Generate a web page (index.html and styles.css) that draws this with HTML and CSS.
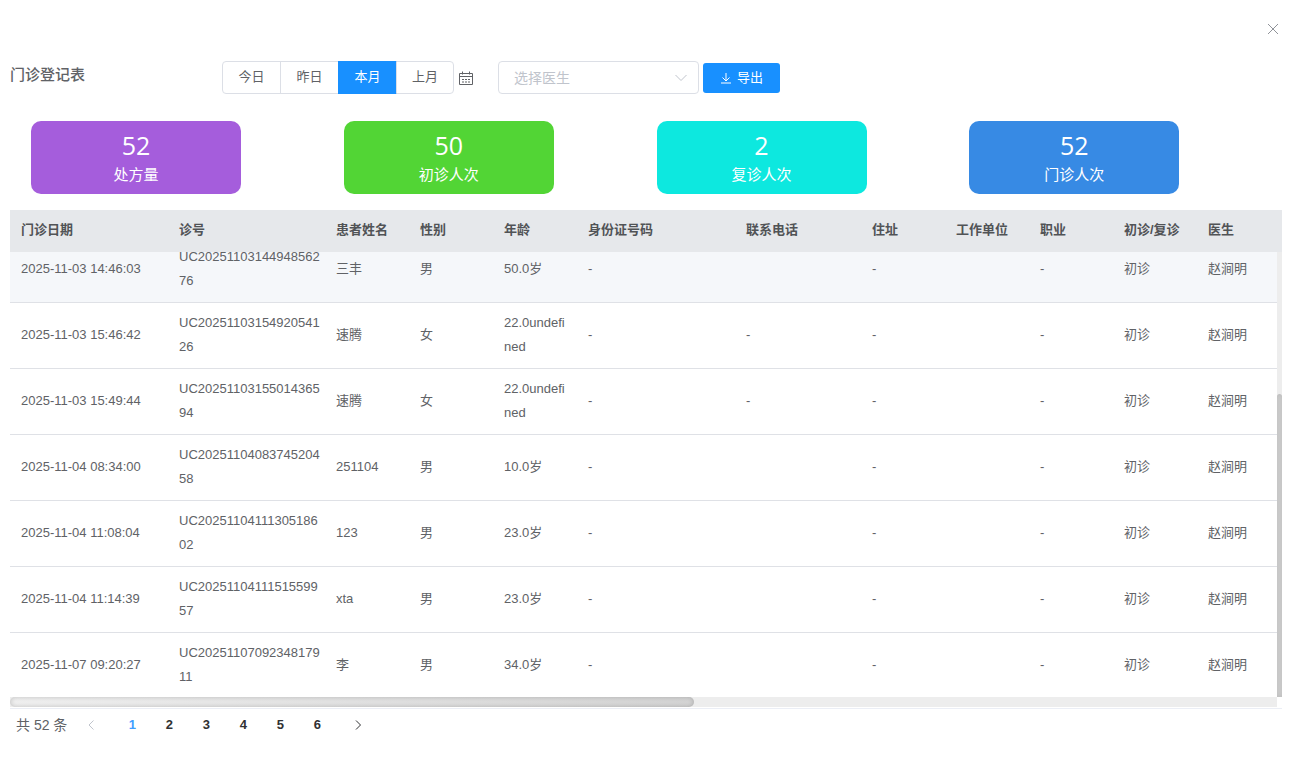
FILE: index.html
```html
<!DOCTYPE html>
<html lang="zh-CN">
<head>
    <meta charset="UTF-8">
    <meta name="viewport" content="width=device-width, initial-scale=1.0">
    <title>门诊登记表</title>
    <link rel="stylesheet" href="styles.css">
</head>
<body>
    <header class="dialog-header">
        <button type="button" class="close" aria-label="关闭">
            <svg width="14" height="14" viewBox="0 0 14 14"><path d="M2 2l10 10M12 2L2 12"/></svg>
        </button>
    </header>

    <form class="toolbar">
        <h1 class="title">门诊登记表</h1>
        <div class="range">
            <label><input type="radio" name="range" value="today"><span>今日</span></label>
            <label><input type="radio" name="range" value="yesterday"><span>昨日</span></label>
            <label><input type="radio" name="range" value="month" checked><span>本月</span></label>
            <label><input type="radio" name="range" value="last"><span>上月</span></label>
        </div>
        <button type="button" class="calendar" aria-label="选择日期">
            <svg width="14" height="14" viewBox="0 0 14 14">
                <path d="M.5 2.5h13v11H.5zM.5 5.5h13M3.5 .5v3M10.500 .5v3"/>
                <path d="M3 8.500h2M6 8.500h2M9 8.500h2M3 11h2M6 11h2M9 11h2"/>
            </svg>
        </button>
        <div class="doctor">
            <select name="doctor" aria-label="选择医生">
                <option value="">选择医生</option>
                <option>赵涧明</option>
            </select>
            <svg width="12" height="8" viewBox="0 0 12 8"><path d="M.5 1L6 6.500 11.500 1"/></svg>
        </div>
        <button type="button" class="export">
            <svg width="12" height="12" viewBox="0 0 12 12"><path d="M6 1v8M2.500 5.500L6 9l3.500-3.500M1 11h10"/></svg>
            <span>导出</span>
        </button>
    </form>

    <section class="cards">
        <div class="card purple"><strong>52</strong><span>处方量</span></div>
        <div class="card green"><strong>50</strong><span>初诊人次</span></div>
        <div class="card cyan"><strong>2</strong><span>复诊人次</span></div>
        <div class="card blue"><strong>52</strong><span>门诊人次</span></div>
    </section>

    <div class="table-box">
        <div class="scroller" id="scroller">
            <table>
                <colgroup>
                    <col class="w-date"><col class="w-no"><col class="w-s"><col class="w-s"><col class="w-s"><col class="w-date">
                    <col class="w-phone"><col class="w-s"><col class="w-s"><col class="w-s"><col class="w-s"><col class="w-last">
                </colgroup>
                <thead>
                    <tr>
                        <th>门诊日期</th><th>诊号</th><th>患者姓名</th><th>性别</th><th>年龄</th><th>身份证号码</th>
                        <th>联系电话</th><th>住址</th><th>工作单位</th><th>职业</th><th>初诊/复诊</th><th>医生</th>
                    </tr>
                </thead>
                <tbody>
                    <tr class="active">
                        <td>2025-11-03 14:46:03</td><td>UC20251103144948562<wbr>76</td><td>三丰</td><td>男</td><td>50.0岁</td><td>-</td>
                        <td></td><td>-</td><td></td><td>-</td><td>初诊</td><td>赵涧明</td>
                    </tr>
                    <tr>
                        <td>2025-11-03 15:46:42</td><td>UC20251103154920541<wbr>26</td><td>速腾</td><td>女</td><td>22.0undefi<wbr>ned</td><td>-</td>
                        <td>-</td><td>-</td><td></td><td>-</td><td>初诊</td><td>赵涧明</td>
                    </tr>
                    <tr>
                        <td>2025-11-03 15:49:44</td><td>UC20251103155014365<wbr>94</td><td>速腾</td><td>女</td><td>22.0undefi<wbr>ned</td><td>-</td>
                        <td>-</td><td>-</td><td></td><td>-</td><td>初诊</td><td>赵涧明</td>
                    </tr>
                    <tr>
                        <td>2025-11-04 08:34:00</td><td>UC20251104083745204<wbr>58</td><td>251104</td><td>男</td><td>10.0岁</td><td>-</td>
                        <td></td><td>-</td><td></td><td>-</td><td>初诊</td><td>赵涧明</td>
                    </tr>
                    <tr>
                        <td>2025-11-04 11:08:04</td><td>UC20251104111305186<wbr>02</td><td>123</td><td>男</td><td>23.0岁</td><td>-</td>
                        <td></td><td>-</td><td></td><td>-</td><td>初诊</td><td>赵涧明</td>
                    </tr>
                    <tr>
                        <td>2025-11-04 11:14:39</td><td>UC20251104111515599<wbr>57</td><td>xta</td><td>男</td><td>23.0岁</td><td>-</td>
                        <td></td><td>-</td><td></td><td>-</td><td>初诊</td><td>赵涧明</td>
                    </tr>
                    <tr>
                        <td>2025-11-07 09:20:27</td><td>UC20251107092348179<wbr>11</td><td>李</td><td>男</td><td>34.0岁</td><td>-</td>
                        <td></td><td>-</td><td></td><td>-</td><td>初诊</td><td>赵涧明</td>
                    </tr>
                </tbody>
            </table>
        </div>
        <div class="bar-y"><div class="thumb-y"></div></div>
        <div class="bar-x"><div class="thumb-x"></div></div>
    </div>

    <nav class="pagination">
        <span class="total">共 52 条</span>
        <button type="button" disabled aria-label="上一页"><svg width="8" height="12" viewBox="0 0 8 12"><path d="M6.500 1.500L2 6l4.500 4.500"/></svg></button>
        <div class="pages">
            <button type="button" class="current">1</button>
            <button type="button">2</button>
            <button type="button">3</button>
            <button type="button">4</button>
            <button type="button">5</button>
            <button type="button">6</button>
        </div>
        <button type="button" aria-label="下一页"><svg width="8" height="12" viewBox="0 0 8 12"><path d="M2 1.500L6.500 6 2 10.500"/></svg></button>
    </nav>

<script src="script.js"></script>
</body>
</html>
```

FILE: styles.css
```css
* {
    box-sizing: border-box;
}

body {
    display: flex;
    flex-direction: column;
    height: 100vh;
    margin: 0;
    padding: 0 19px 0 10px;
    overflow: hidden;
    background: #fff;
    color: #606266;
    font: 13px/24px "Liberation Sans", "Noto Sans CJK SC", sans-serif;
}

button, select {
    font: inherit;
    color: inherit;
    border: none;
    background: none;
    padding: 0;
    cursor: pointer;
}

svg {
    display: block;
    fill: none;
    stroke: currentColor;
}

.dialog-header {
    display: flex;
    justify-content: flex-end;
    padding: 22px 2px 25px;
}

.close {
    color: #909399;
}

/* toolbar */
.toolbar {
    display: flex;
    align-items: center;
    height: 33px;
}

.title {
    width: 212px;
    margin: 0;
    padding-bottom: 6px;
    font-size: 15px;
    font-weight: 500;
}

.range {
    display: flex;
    padding-right: 1px;
}

.range label {
    position: relative;
    width: 58px;
}

.range input {
    position: absolute;
    inset: 0;
    margin: 0;
    opacity: 0;
}

.range span {
    display: block;
    height: 33px;
    margin-right: -1px;
    border: 1px solid #dcdfe6;
    line-height: 30px;
    text-align: center;
}

.range label:first-child span {
    border-radius: 4px 0 0 4px;
}

.range label:last-child span {
    margin-right: 0;
    border-radius: 0 4px 4px 0;
}

.range input:checked + span {
    position: relative;
    border-color: #1890ff;
    background: #1890ff;
    color: #fff;
}

.calendar {
    margin: 0 25px 0 4px;
}

.doctor {
    position: relative;
    width: 201px;
    margin-right: 4px;
}

.doctor select {
    width: 100%;
    height: 33px;
    padding: 0 15px;
    border: 1px solid #dcdfe6;
    border-radius: 4px;
    appearance: none;
    color: #c0c4cc;
    font-size: 14px;
}

.doctor svg {
    position: absolute;
    top: 13px;
    right: 12px;
    color: #c0c4cc;
    pointer-events: none;
}

.export {
    display: flex;
    align-items: center;
    justify-content: center;
    gap: 5px;
    width: 77px;
    height: 30px;
    border-radius: 3px;
    background: #1890ff;
    color: #fff;
}

/* statistics */
.cards {
    display: grid;
    grid-template-columns: repeat(4, 1fr);
    padding: 27px 0 16px 21px;
}

.card {
    display: flex;
    flex-direction: column;
    align-items: center;
    gap: 2px;
    width: 210px;
    height: 73px;
    padding-top: 8px;
    border-radius: 10px;
    color: #fff;
    font-size: 15px;
}

.card strong {
    font: 25px/32px "Open Sans", sans-serif;
}

.purple { background: #a55ddc; }
.green { background: #52d535; }
.cyan { background: #0de8df; }
.blue { background: #378ae4; }

/* table */
.table-box {
    display: grid;
    grid-template-columns: 1fr 5px;
    grid-template-rows: 42px 1fr 10px;
    flex: 1;
    min-height: 0;
    padding-bottom: 1px;
    border-bottom: 1px solid #ebeef5;
}

.scroller {
    grid-area: 1 / 1 / 3 / 3;
    min-height: 0;
    overflow-y: auto;
    scrollbar-width: none;
}

table {
    width: 100%;
    table-layout: fixed;
    border-collapse: separate;
    border-spacing: 0;
}

.w-date { width: 158px; }
.w-no { width: 157px; }
.w-s { width: 84px; }
.w-phone { width: 126px; }
.w-last { width: 85px; }

th {
    position: sticky;
    top: 0;
    padding: 8px 0 10px 11px;
    background: #e6e8eb;
    color: #515356;
    text-align: left;
}

td {
    height: 66px;
    padding: 8px 4px 9px 11px;
    border-bottom: 1px solid #dfe1e6;
}

.active td {
    background: #f5f7fa;
}

.bar-y {
    z-index: 1;
    grid-area: 2 / 2;
    display: flex;
    flex-direction: column;
    justify-content: flex-end;
    background: #ededed;
}

.thumb-y {
    height: 68%;
    border-radius: 5px 5px 0 0;
    background: #d0d0d0;
    box-shadow: inset 0 0 5px rgba(0, 0, 0, .1);
}

.bar-x {
    grid-area: 3 / 1;
    background: #ededed;
}

.thumb-x {
    width: 54%;
    height: 10px;
    border-radius: 5px;
    background: linear-gradient(to right, #f0f0f0, #d4d4d4);
    box-shadow: inset 0 0 5px rgba(0, 0, 0, .2);
}

/* pagination */
.pagination {
    display: flex;
    align-items: center;
    height: 52px;
    padding: 0 6px 20px;
}

.total {
    margin-right: 8px;
    font-size: 14px;
}

.pagination button {
    display: flex;
    align-items: center;
    justify-content: center;
    width: 32px;
    height: 28px;
    color: #303133;
    font-weight: bold;
}

.pagination button:disabled {
    color: #c0c4cc;
}

.pagination .current {
    color: #409eff;
}

.pages {
    display: flex;
    gap: 5px;
    margin: 0 9px;
}
```

FILE: script.js
```js
const scroller = document.getElementById('scroller');
scroller.scrollTop = 15;
```
